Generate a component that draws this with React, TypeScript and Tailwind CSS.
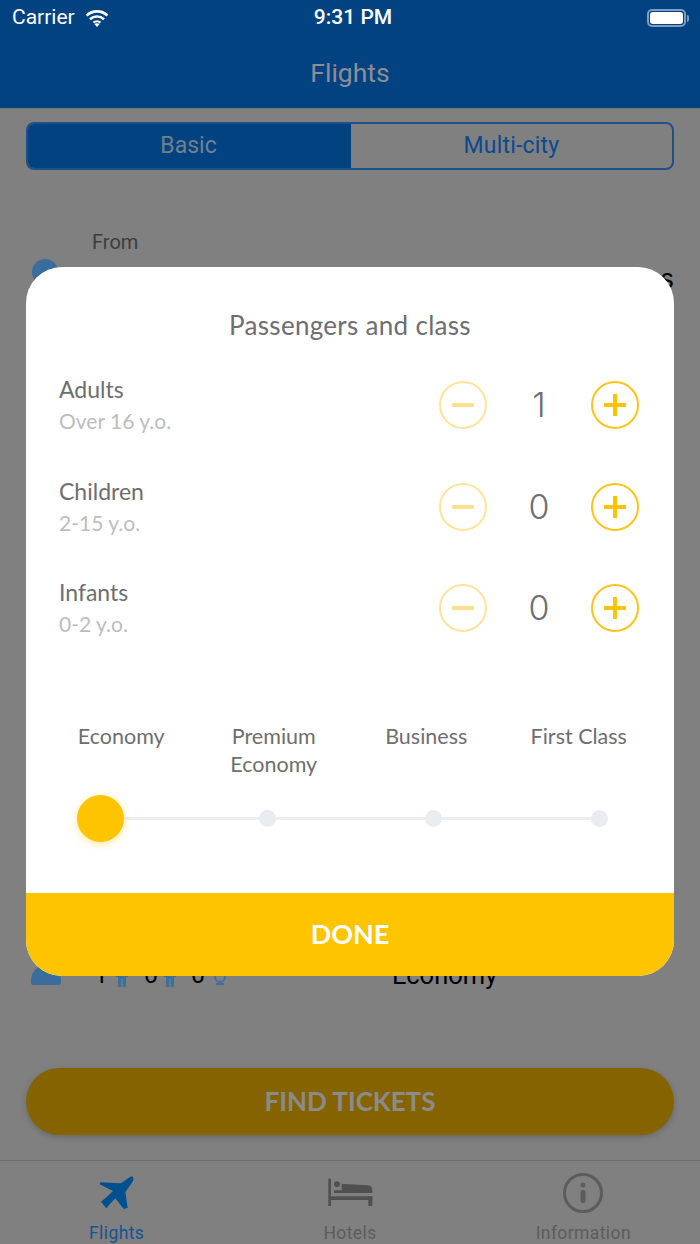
const rows = [
  { name: "Adults", sub: "Over 16 y.o.", n: 1 },
  { name: "Children", sub: "2-15 y.o.", n: 0 },
  { name: "Infants", sub: "0-2 y.o.", n: 0 },
];

function Person({ baby }: { baby?: boolean }) {
  return baby ? (
    <svg width="14" height="16" viewBox="0 0 14 16" className="mt-[12px] shrink-0">
      <g fill="none" stroke="#3f6f9c" strokeWidth="2">
        <circle cx="7" cy="6" r="5" />
        <path d="M3 13h8" />
      </g>
    </svg>
  ) : (
    <svg width="12" height="16" viewBox="0 0 12 16" className="mt-[12px] shrink-0">
      <path d="M0 0h12v6h-2v10H6.6V8H5.4v8H2V6H0z" fill="#3f6f9c" />
    </svg>
  );
}

function Stepper({ n }: { n: number }) {
  return (
    <div className="flex items-center">
      <div className="w-12 h-12 rounded-full border-2 border-[#fde49c] flex items-center justify-center">
        <svg width="24" height="24" viewBox="0 0 24 24">
          <rect x="1" y="10" width="22" height="4" rx="1" fill="#fde08c" />
        </svg>
      </div>
      <div className="w-[104px] text-center text-[34px] leading-none text-[#6e6e6e] font-['Inter',sans-serif] font-light">{n}</div>
      <div className="w-12 h-12 rounded-full border-2 border-[#fcc419] flex items-center justify-center">
        <svg width="24" height="24" viewBox="0 0 24 24">
          <path d="M1 10h9V1h4v9h9v4h-9v9h-4v-9H1z" fill="#ffc400" />
        </svg>
      </div>
    </div>
  );
}

export default function App() {
  return (
    <div className="relative w-[700px] h-[1244px] overflow-hidden bg-[#808080] font-['Inter',sans-serif] flex flex-col">
      <header className="h-[109px] bg-[#024280] border-b border-[#6b7480] shrink-0 flex flex-col">
        <div className="h-[36px] flex items-center justify-between pl-[12px] pr-[11px] text-white relative">
          <div className="flex items-center gap-[10px]">
            <span className="text-[21px] font-['Roboto',sans-serif]">Carrier</span>
            <svg width="24" height="18" viewBox="0 0 24 18" fill="none" stroke="white" strokeLinecap="butt">
              <path d="M1.5 6.5C7.5 1 16.5 1 22.5 6.5" strokeWidth="2.6" />
              <path d="M5 10.2c4-3.6 10-3.6 14 0" strokeWidth="2.6" />
              <path d="M8.5 13.6c2-1.7 5-1.7 7 0" strokeWidth="2.4" />
              <path d="M12 18l-2.6-3c1.5-1 3.7-1 5.2 0z" fill="white" stroke="none" />
            </svg>
          </div>
          <span className="absolute left-0 right-0 pl-[6px] text-center text-[21px] font-medium font-['Roboto',sans-serif]">9:31 PM</span>
          <div className="flex items-center gap-[1px]">
            <div className="w-[39px] h-[18px] rounded-[5px] border-2 border-[#7e9dc0] p-[1px]">
              <div className="w-full h-full rounded-[3px] bg-white" />
            </div>
            <div className="w-[2px] h-[7px] bg-[#7e9dc0] rounded-r-sm" />
          </div>
        </div>
        <div className="text-center text-[26.5px] leading-[30px] mt-[22px] text-[#8a8f96] font-['Roboto',sans-serif]">Flights</div>
      </header>

      <div className="mx-[26px] mt-[13px] h-[48px] rounded-[8px] border-2 border-[#1f5088] flex overflow-hidden shrink-0 text-[23px] font-['Roboto',sans-serif]">
        <div className="flex-1 bg-[#024280] flex items-center justify-center pr-[2px] text-[#70808f]">Basic</div>
        <div className="flex-1 flex items-center justify-center tracking-[0.2px] text-[#0c4a8e]">Multi-city</div>
      </div>

      <div className="pl-[92px] mt-[60px] text-[20px] leading-6 text-[#3d3d3d] font-['Roboto',sans-serif] shrink-0">From</div>
      <div className="h-[40px] mt-[5px] pl-[32px] pr-[26px] flex justify-between shrink-0">
        <div className="w-[26px] h-[26px] rounded-full bg-[#3a6d9c]" />
        <span className="text-[26px] text-black">s</span>
      </div>

      <div className="mt-[660px] h-[39px] flex items-start pl-[31px] shrink-0 text-[25px] text-black font-['Roboto',sans-serif] leading-[32px]">
        <div className="w-[30px] h-[20px] mt-[6px] rounded-t-[15px] rounded-b-[2px] bg-[#3a6d9c]" />
        <span className="ml-[33px] w-[14px]">1</span>
        <div className="ml-[8px]"><Person /></div>
        <span className="ml-[16px] w-[14px]">0</span>
        <div className="ml-[6px]"><Person /></div>
        <span className="ml-[15px] w-[14px]">0</span>
        <div className="ml-[8px]"><Person baby /></div>
        <span className="ml-[165px] text-[25.5px]">Economy</span>
      </div>

      <div className="mx-[26px] mt-[70px] h-[67px] rounded-[34px] bg-[#856400] shadow-[0_2px_6px_rgba(0,0,0,0.2)] flex items-center justify-center text-[26px] font-bold text-[#8b8b8b] font-['Lato',sans-serif] shrink-0">
        FIND TICKETS
      </div>

      <nav className="mt-[25px] flex-1 border-t border-[#6e6e6e] flex text-[17.5px] tracking-[0.4px] font-['Roboto',sans-serif]">
        <div className="flex-1 flex flex-col items-center pt-[12px]">
          <svg width="60" height="38" viewBox="-10 14 180 114" fill="#00508f">
            <path d="M120 25C128 22 131 27 128 38L105 72L112 118L100 122L75 90L58 108L48 120L32 100L50 85L68 68L28 48L30 42L92 45Z" />
          </svg>
          <span className="text-[#15538f] mt-[9px]">Flights</span>
        </div>
        <div className="flex-1 flex flex-col items-center pt-[12px]">
          <svg width="60" height="38" viewBox="0 18 180 114" fill="#505050">
            <rect x="25" y="35" width="8" height="82" />
            <rect x="33" y="88" width="124" height="11" />
            <rect x="145" y="88" width="12" height="29" />
            <circle cx="51" cy="52" r="9" />
            <path d="M42 70H65V50L143 55Q157 57 157 70V78H42Z" />
          </svg>
          <span className="text-[#5c5c5c] mt-[9px]">Hotels</span>
        </div>
        <div className="flex-1 flex flex-col items-center pt-[12px]">
          <svg width="40" height="40" viewBox="0 0 40 40">
            <circle cx="20" cy="20" r="18.5" fill="none" stroke="#5c5c5c" strokeWidth="3" />
            <circle cx="20" cy="12" r="2.5" fill="#5c5c5c" />
            <rect x="17.5" y="17" width="5" height="13" rx="2" fill="#5c5c5c" />
          </svg>
          <span className="text-[#5c5c5c] mt-[7px]">Information</span>
        </div>
      </nav>

      <div className="absolute left-[26px] top-[267px] w-[648px] h-[709px] rounded-[36px] bg-white overflow-hidden flex flex-col font-['Lato',sans-serif]">
        <div className="text-center text-[26px] tracking-[0.3px] leading-[30px] mt-[43px] text-[#6e6e6e]">Passengers and class</div>
        <div className="mt-[37px] flex flex-col gap-[45.5px] pl-[33px] pr-[35px]">
          {rows.map((r) => (
            <div key={r.name} className="h-[56px] flex items-center justify-between">
              <div>
                <div className="text-[23px] leading-[28px] text-[#6e6e6e]">{r.name}</div>
                <div className="text-[21px] leading-[28px] mt-[4px] text-[#bdbdbd]">{r.sub}</div>
              </div>
              <Stepper n={r.n} />
            </div>
          ))}
        </div>
        <div className="mt-[87px] px-[19px] grid grid-cols-4 text-[21.5px] leading-[27.5px] text-[#6e6e6e] text-center h-[56px]">
          <div>Economy</div>
          <div>Premium<br />Economy</div>
          <div>Business</div>
          <div>First Class</div>
        </div>
        <div className="relative mt-[16px] ml-[51px] w-[531px] h-[47px] flex items-center">
          <div className="absolute left-[4px] right-[4px] h-[3px] bg-[#eceef1]" />
          <div className="relative w-[47px] h-[47px] rounded-full bg-[#ffc400] shadow-[0_2px_8px_rgba(255,196,0,0.4)]" />
          <div className="relative ml-[135px] w-[17px] h-[17px] rounded-full bg-[#e9ecf0]" />
          <div className="relative ml-[149px] w-[17px] h-[17px] rounded-full bg-[#e9ecf0]" />
          <div className="relative ml-[149px] w-[17px] h-[17px] rounded-full bg-[#e9ecf0]" />
        </div>
        <div className="mt-auto h-[83px] shrink-0 bg-[#ffc400] flex items-center justify-center text-white text-[27px] font-bold">DONE</div>
      </div>
    </div>
  );
}
